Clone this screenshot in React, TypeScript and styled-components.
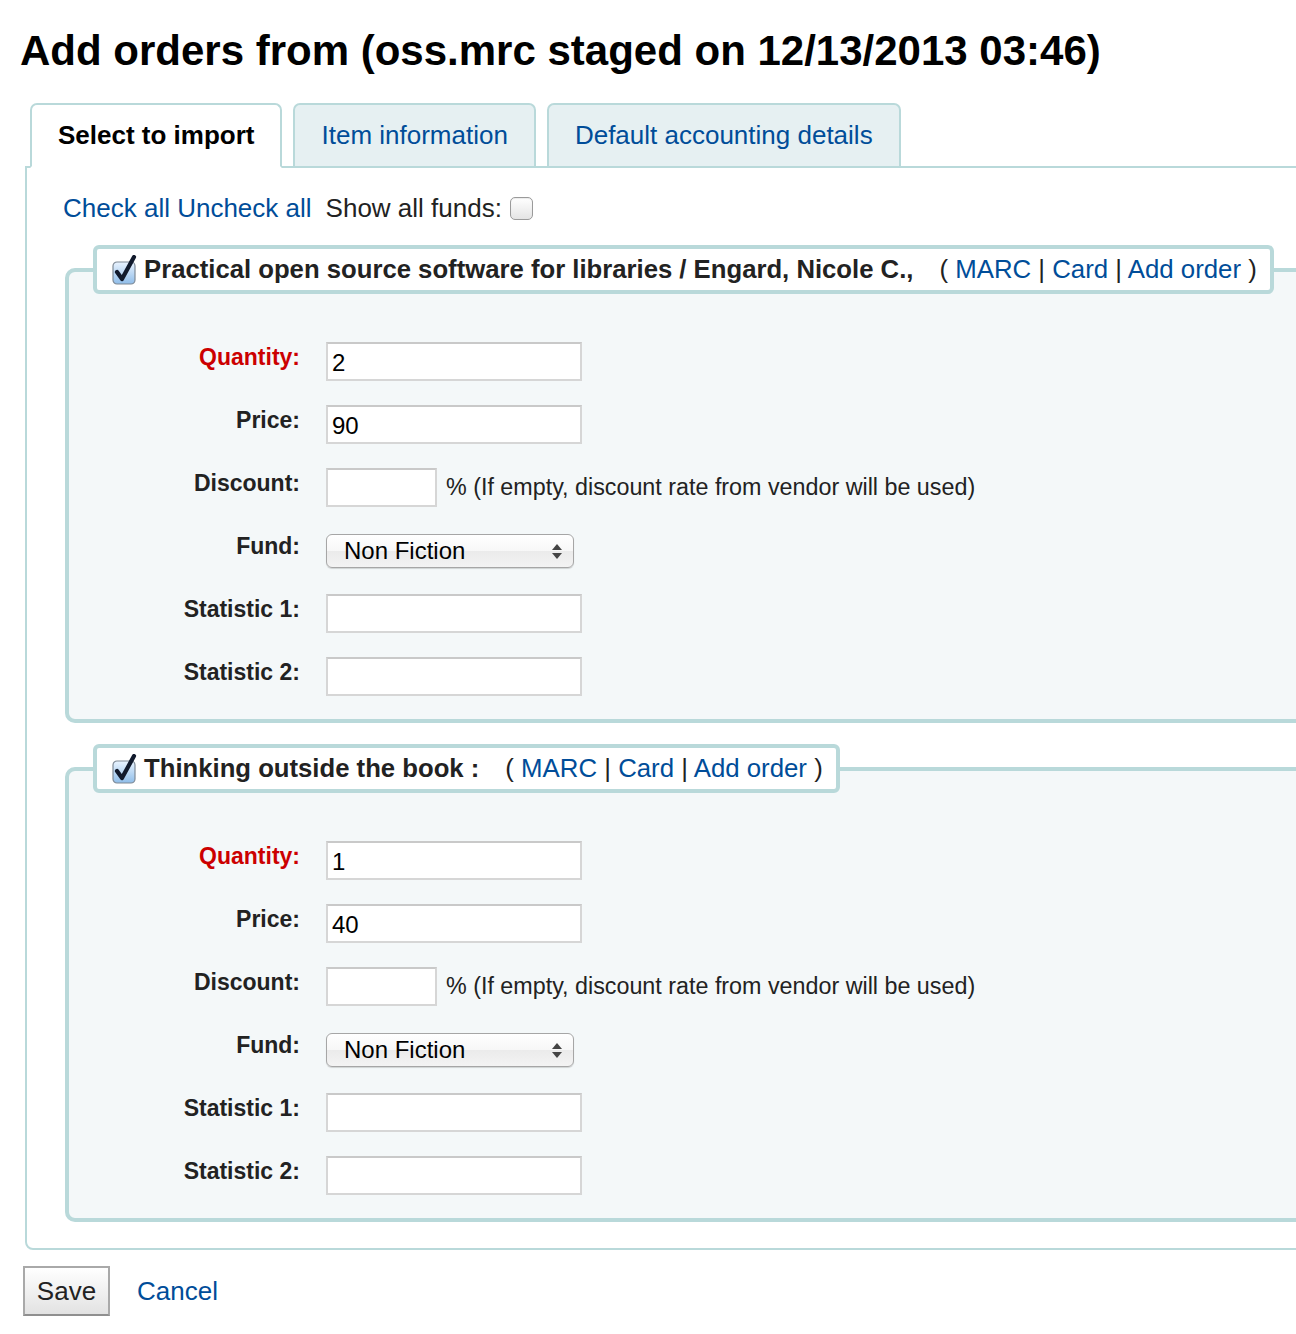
import React from 'react';
import styled, { createGlobalStyle } from 'styled-components';

const teal = '#b9d9da';
const link = '#004d99';

const GlobalStyle = createGlobalStyle`
  html, body {
    margin: 0;
    padding: 0;
    overflow-x: hidden;
    background: #fff;
    font-family: "Liberation Sans", Arial, sans-serif;
    color: #222;
  }
`;

const Page = styled.div`
  width: 1296px;
  overflow: hidden;
  padding-bottom: 40px;
`;

const Title = styled.h1`
  margin: 27px 0 0 20px;
  font-size: 42px;
  line-height: 48px;
  font-weight: bold;
  color: #000;
  white-space: nowrap;
`;

const Tabs = styled.ul`
  list-style: none;
  display: flex;
  gap: 11px;
  margin: 28px 0 0 30px;
  padding: 0;
  position: relative;
  z-index: 1;
`;

const Tab = styled.li<{ $active?: boolean }>`
  height: 61px;
  display: flex;
  align-items: center;
  padding: 0 26px;
  border: 2px solid ${teal};
  border-bottom-color: ${(p) => (p.$active ? '#fff' : teal)};
  border-radius: 7px 7px 0 0;
  margin-bottom: -2px;
  background: ${(p) => (p.$active ? '#fff' : '#e6f0f2')};
  font-size: 26px;
  font-weight: ${(p) => (p.$active ? 'bold' : 'normal')};
  color: ${(p) => (p.$active ? '#000' : link)};
  white-space: nowrap;
`;

const Panel = styled.div`
  margin-left: 25px;
  width: 1320px;
  border: 2px solid ${teal};
  border-radius: 0 0 0 8px;
  padding: 25px 0 26px 38px;
`;

const Toolbar = styled.div`
  display: flex;
  align-items: center;
  font-size: 26px;
  line-height: 30px;
  margin: 0 0 22px -2px;
`;

const A = styled.a`
  color: ${link};
  text-decoration: none;
  cursor: pointer;
`;

const Plain = styled.span`
  margin-left: 14px;
`;

const UncheckedBox = styled.span`
  display: inline-block;
  width: 21px;
  height: 21px;
  margin-left: 8px;
  border: 1px solid #9a9a9a;
  border-radius: 5px;
  background: linear-gradient(#ffffff, #e4e4e4);
  box-shadow: inset 0 1px 1px rgba(0, 0, 0, 0.08);
`;

const Fieldset = styled.fieldset`
  margin: 0 0 21px 0;
  padding: 0 0 11px 0;
  border: 4px solid ${teal};
  border-radius: 10px;
  background: #f4f8f9;
  &:last-child {
    margin-bottom: 0;
  }
`;

const Legend = styled.legend`
  margin-left: 24px;
  padding: 5px 13px 5px 15px;
  background: #fff;
  border: 4px solid ${teal};
  border-radius: 6px;
  display: flex;
  align-items: center;
  font-size: 26px;
  line-height: 31px;
  white-space: nowrap;
`;

const RecordTitle = styled.b`
  margin-left: 6px;
  font-size: 25.7px;
  color: #222;
`;

const Links = styled.span`
  margin-left: 26px;
  font-size: 25.8px;
  color: #222;
`;

const Rows = styled.div`
  display: grid;
  grid-template-columns: 231px 1fr;
  column-gap: 26px;
  grid-auto-rows: 63px;
  align-items: center;
  padding-top: 36px;
`;

const Label = styled.label<{ $required?: boolean }>`
  text-align: right;
  font-size: 23px;
  font-weight: bold;
  color: ${(p) => (p.$required ? '#cc0000' : '#222')};
  margin-bottom: 8px;
`;

const Field = styled.div`
  display: flex;
  align-items: center;
`;

const Input = styled.input<{ $w?: number }>`
  box-sizing: border-box;
  width: ${(p) => p.$w ?? 256}px;
  height: 39px;
  padding: 2px 4px 0;
  border: 2px solid #d6d6d6;
  border-top-color: #c9c9c9;
  background: #fff;
  font-family: "Liberation Sans", Arial, sans-serif;
  font-size: 24px;
  color: #000;
  outline: none;
`;

const Note = styled.span`
  margin-left: 9px;
  font-size: 23.3px;
  color: #222;
`;

const SelectWrap = styled.span`
  position: relative;
  display: inline-block;
`;

const Select = styled.select`
  appearance: none;
  -webkit-appearance: none;
  box-sizing: border-box;
  width: 248px;
  height: 34px;
  padding: 0 0 0 17px;
  border: 1px solid #a6a6a6;
  border-radius: 6px;
  background: linear-gradient(#ffffff 0%, #f7f7f7 50%, #ebebeb 51%, #f3f3f3 100%);
  box-shadow: 0 1px 1px rgba(0, 0, 0, 0.15);
  font-family: "Liberation Sans", Arial, sans-serif;
  font-size: 24px;
  color: #000;
`;

const Arrows = styled.svg`
  position: absolute;
  right: 12px;
  top: 10px;
  pointer-events: none;
`;

const Actions = styled.div`
  display: flex;
  align-items: center;
  gap: 27px;
  margin: 16px 0 0 23px;
`;

const Button = styled.button`
  box-sizing: border-box;
  width: 87px;
  height: 50px;
  border: 2px solid #a9a9a9;
  border-bottom-color: #8f8f8f;
  background: linear-gradient(#ffffff, #e2e2e2);
  font-family: "Liberation Sans", Arial, sans-serif;
  font-size: 26px;
  color: #222;
  padding: 0;
`;

const CancelLink = styled(A)`
  font-size: 26px;
`;

function CheckedBox() {
  return (
    <svg width="26" height="30" viewBox="0 0 26 30">
      <defs>
        <linearGradient id="cbg" x1="0" y1="0" x2="0" y2="1">
          <stop offset="0" stopColor="#eaf4ff" />
          <stop offset="1" stopColor="#8fbde9" />
        </linearGradient>
      </defs>
      <rect x="1" y="7" width="22" height="22" rx="4" fill="url(#cbg)" stroke="#7f8a96" strokeWidth="1.2" />
      <path d="M5 17 L10 24 L22 2" fill="none" stroke="#111a2c" strokeWidth="4.2" strokeLinecap="round" strokeLinejoin="round" />
    </svg>
  );
}

type Order = {
  title: string;
  quantity: string;
  price: string;
};

const orders: Order[] = [
  {
    title: 'Practical open source software for libraries / Engard, Nicole C.,',
    quantity: '2',
    price: '90',
  },
  { title: 'Thinking outside the book :', quantity: '1', price: '40' },
];

function OrderFieldset({ order }: { order: Order }) {
  return (
    <Fieldset>
      <Legend>
        <CheckedBox />
        <RecordTitle>{order.title}</RecordTitle>
        <Links>
          ( <A>MARC</A> | <A>Card</A> | <A>Add order</A> )
        </Links>
      </Legend>
      <Rows>
        <Label $required>Quantity:</Label>
        <Field>
          <Input defaultValue={order.quantity} />
        </Field>
        <Label>Price:</Label>
        <Field>
          <Input defaultValue={order.price} />
        </Field>
        <Label>Discount:</Label>
        <Field>
          <Input $w={111} />
          <Note>% (If empty, discount rate from vendor will be used)</Note>
        </Field>
        <Label>Fund:</Label>
        <Field>
          <SelectWrap>
            <Select defaultValue="nf">
              <option value="nf">Non Fiction</option>
            </Select>
            <Arrows width="10" height="15" viewBox="0 0 10 15">
              <path d="M5 0 L10 6 H0 Z" fill="#444" />
              <path d="M5 15 L10 9 H0 Z" fill="#444" />
            </Arrows>
          </SelectWrap>
        </Field>
        <Label>Statistic 1:</Label>
        <Field>
          <Input />
        </Field>
        <Label>Statistic 2:</Label>
        <Field>
          <Input />
        </Field>
      </Rows>
    </Fieldset>
  );
}

export default function App() {
  return (
    <Page>
      <GlobalStyle />
      <Title>Add orders from (oss.mrc staged on 12/13/2013 03:46)</Title>
      <Tabs>
        <Tab $active>Select to import</Tab>
        <Tab>Item information</Tab>
        <Tab>Default accounting details</Tab>
      </Tabs>
      <Panel>
        <Toolbar>
          <A>Check all</A>&nbsp;<A>Uncheck all</A>
          <Plain>Show all funds:</Plain>
          <UncheckedBox />
        </Toolbar>
        {orders.map((o) => (
          <OrderFieldset key={o.title} order={o} />
        ))}
      </Panel>
      <Actions>
        <Button>Save</Button>
        <CancelLink>Cancel</CancelLink>
      </Actions>
    </Page>
  );
}
